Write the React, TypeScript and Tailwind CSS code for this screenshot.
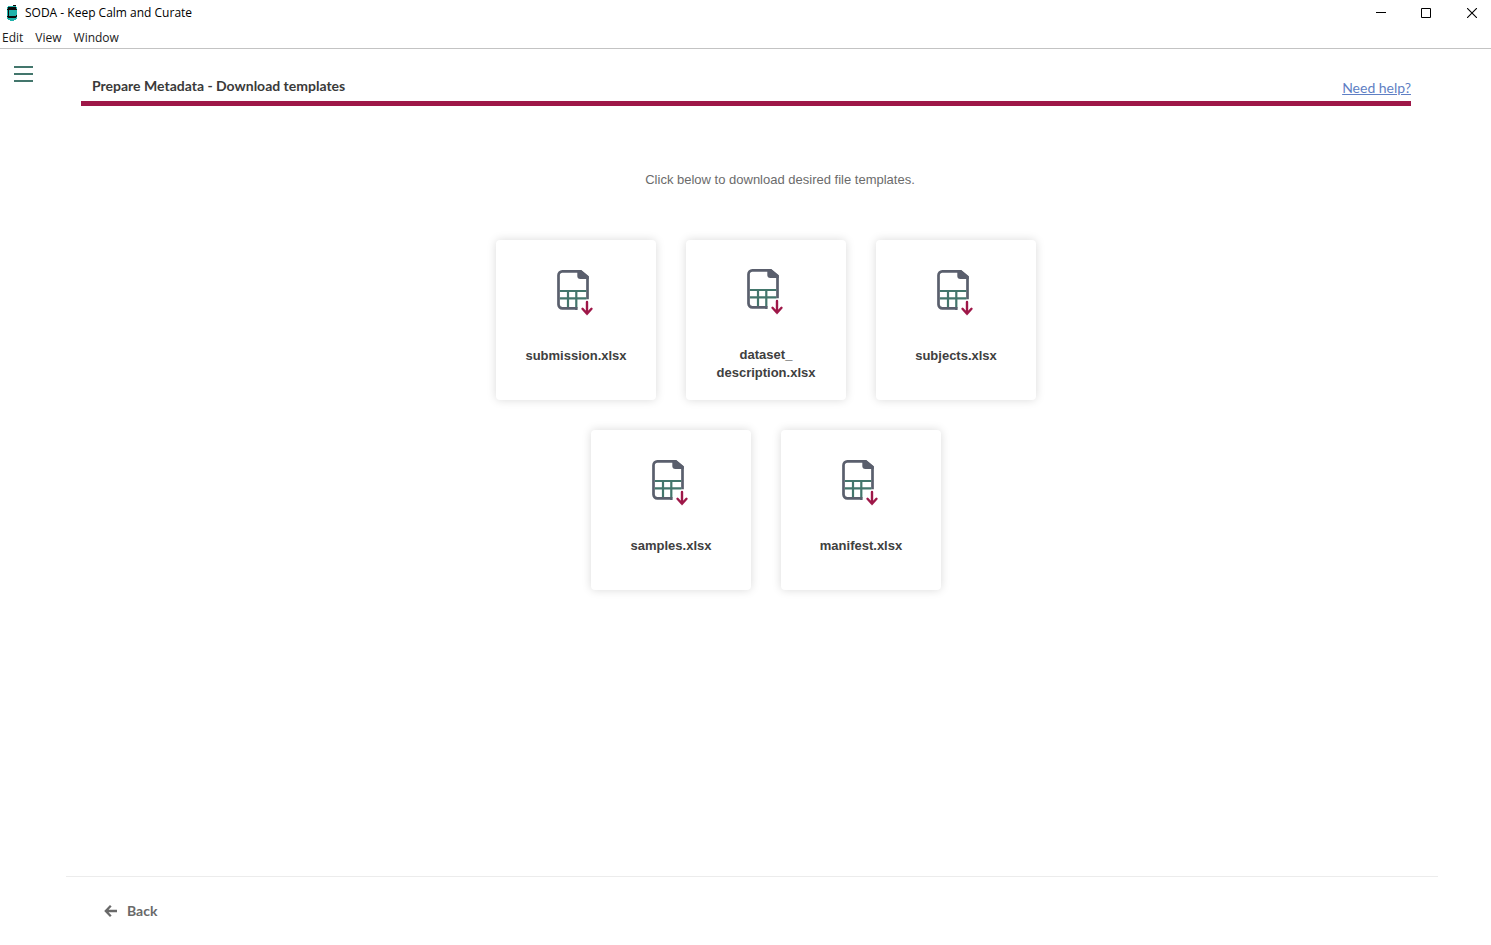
const templates: { id: string; lines: string[] }[][] = [
  [
    { id: "submission", lines: ["submission.xlsx"] },
    { id: "description", lines: ["dataset_", "description.xlsx"] },
    { id: "subjects", lines: ["subjects.xlsx"] },
  ],
  [
    { id: "samples", lines: ["samples.xlsx"] },
    { id: "manifest", lines: ["manifest.xlsx"] },
  ],
];

function AppLogo() {
  return (
    <svg width="12" height="16" viewBox="0 0 12 16" shapeRendering="crispEdges" aria-hidden="true">
      <path d="M2 1h8v1h1v12h-1v1H8v1H4v-1H2v-1H1V2h1z" fill="#20b2aa" />
      <path d="M2 2h8v3H2zM1 4h1v1H1zM10 4h1v1h-1zM2 5h1v6H2zM2 11h8v2H2zM10 10h1v2h-1zM1 11h1v1H1z" fill="#0b0b0b" />
      <path d="M7 0h3v1H7z" fill="#0b0b0b" />
    </svg>
  );
}

function SheetDownloadIcon() {
  return (
    <svg width="38" height="48" viewBox="0 0 38 48" fill="none" aria-hidden="true">
      <path
        d="M20.400 39.400H5.300a3.800 3.800 0 0 1-3.800-3.800V6.200A3.800 3.800 0 0 1 5.300 2.400h18.500L30.500 8v22.300"
        stroke="#5a5f6d"
        strokeWidth="2.700"
      />
      <path d="M2.800 22h26.500M2.800 29.300h26.500M11 22v16M19.300 22v16.500" stroke="#43766c" strokeWidth="2.200" />
      <path d="M18.200 38h2.200v3h-2.200z" fill="#5a5f6d" />
      <path d="M20.300 1.500h4L31.700 7.500V10H23.300a3 3 0 0 1-3-3z" fill="#5a5f6d" />
      <path d="M30 33v11.500M25.500 39.800 30 44.800l4.500-5" stroke="#9e1748" strokeWidth="2.400" strokeLinecap="round" />
    </svg>
  );
}

function TemplateCard({ lines }: { lines: string[] }) {
  return (
    <button
      type="button"
      className="flex size-40 cursor-pointer flex-col items-center justify-center rounded bg-white pt-2.5 shadow-[0_0_10px_rgba(0,0,0,0.15)]"
    >
      <SheetDownloadIcon />
      <span className="mt-[30px] min-h-[34px] text-[13px] leading-[18px] font-bold text-[#404040]">
        {lines.map((line) => (
          <span key={line} className="block">
            {line}
          </span>
        ))}
      </span>
    </button>
  );
}

export default function App() {
  return (
    <div className="flex min-h-screen flex-col bg-white font-['Liberation_Sans',Arial,sans-serif]">
      <header className="border-b border-[#c3c3c3] font-['Open_Sans','Noto_Sans',sans-serif] text-xs text-black">
        <div className="flex h-[26px] items-center justify-between">
          <div className="flex items-center gap-[7px] pl-1.5">
            <AppLogo />
            <span>SODA - Keep Calm and Curate</span>
          </div>
          <div className="flex">
            <button type="button" aria-label="Minimize" className="flex h-6 w-[45px] items-center justify-center">
              <svg width="10" height="10" viewBox="0 0 10 10" stroke="black">
                <path d="M0 4.500h10" />
              </svg>
            </button>
            <button type="button" aria-label="Maximize" className="flex h-6 w-[46px] items-center justify-center">
              <svg width="10" height="10" viewBox="0 0 10 10" fill="none" stroke="black">
                <path d="M.5.5h9v9h-9z" />
              </svg>
            </button>
            <button type="button" aria-label="Close" className="mr-[-4px] flex h-6 w-[46px] items-center justify-center">
              <svg width="10" height="10" viewBox="0 0 10 10" stroke="black" strokeWidth="1.100">
                <path d="m0 0 10 10M10 0 0 10" />
              </svg>
            </button>
          </div>
        </div>
        <nav className="flex h-[22px] items-center gap-3 pt-0.5 pl-0.5 text-[#1a1a1a]">
          <button type="button">Edit</button>
          <button type="button">View</button>
          <button type="button">Window</button>
        </nav>
      </header>

      <div className="flex flex-1">
        <aside className="w-[66px] shrink-0 pt-[17px] pl-3.5">
          <button type="button" aria-label="Toggle menu" className="flex w-[19px] cursor-pointer flex-col gap-[5px]">
            <span className="h-0.5 bg-[#43766c]" />
            <span className="h-0.5 bg-[#43766c]" />
            <span className="h-0.5 bg-[#43766c]" />
          </button>
        </aside>

        <main className="mr-[53px] flex flex-1 flex-col">
          <div className="mt-[26px] mr-[27px] ml-[15px] flex items-start justify-between border-b-[5px] border-[#9e1748] pb-1 pl-[11px] font-['Lato',sans-serif] text-sm">
            <h1 className="leading-[22px] font-bold text-[#3a3a3a]">Prepare Metadata - Download templates</h1>
            <a href="#help" className="-mb-0.5 pt-0.5 leading-[22px] text-[#5f7fc4] underline">
              Need help?
            </a>
          </div>

          <section className="flex flex-1 flex-col items-center pt-16 pl-7">
            <p className="pl-7 text-[13px] leading-5 text-[#6b6b6b]">Click below to download desired file templates.</p>
            <div className="mt-[50px] flex flex-col gap-[30px]">
              {templates.map((row) => (
                <div key={row[0].id} className="flex justify-center gap-[30px]">
                  {row.map((item) => (
                    <TemplateCard key={item.id} lines={item.lines} />
                  ))}
                </div>
              ))}
            </div>
          </section>

          <footer className="h-[69px] border-t border-[#ececec] pt-6 pl-[38px]">
            <button
              type="button"
              className="flex cursor-pointer items-center gap-2.5 font-['Lato',sans-serif] text-sm leading-5 font-bold text-[#696969]"
            >
              <svg width="13" height="12" viewBox="0 0 13 12" fill="none" stroke="currentColor" strokeWidth="2.300" aria-hidden="true">
                <path d="M6.800.8 1.800 6l5 5.200M2 6h11" />
              </svg>
              Back
            </button>
          </footer>
        </main>
      </div>
    </div>
  );
}
